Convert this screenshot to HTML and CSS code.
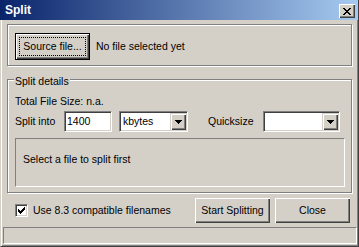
FILE: index.html
```html
<!DOCTYPE html>
<html lang="en">
  <head>
    <meta charset="UTF-8" />
    <title>Split</title>
    <link rel="stylesheet" href="styles.css">
  </head>

  <body>
    <div class="window">
      <div class="titleBar">
        <span class="title">Split</span>
        <span class="closeButton">
          <svg width="8" height="7" viewBox="0 0 8 7" shape-rendering="crispEdges">
            <path d="M0 0h2v1H0zM6 0h2v1H6zM1 1h2v1H1zM5 1h2v1H5zM2 2h4v1H2zM3 3h2v1H3zM2 4h4v1H2zM1 5h2v1H1zM5 5h2v1H5zM0 6h2v1H0zM6 6h2v1H6z" />
          </svg>
        </span>
      </div>

      <div class="group sourceGroup">
        <button class="button defaultButton"><span class="focus">Source file...</span></button>
        <span class="fileName">No file selected yet</span>
      </div>

      <div class="group detailsGroup">
        <span class="legend">Split details</span>
        <p class="line">Total File Size: n.a.</p>
        <div class="splitRow">
          <span class="splitLabel">Split into</span>
          <span class="edit">1400</span>
          <span class="combo unitCombo">
            <span class="comboText">kbytes</span>
            <span class="comboArrow">
              <svg width="7" height="4" viewBox="0 0 7 4" shape-rendering="crispEdges">
                <path d="M0 0h7v1H0zM1 1h5v1H1zM2 2h3v1H2zM3 3h1v1H3z" />
              </svg>
            </span>
          </span>
          <span class="quickLabel">Quicksize</span>
          <span class="combo quickCombo">
            <span class="comboText"></span>
            <span class="comboArrow">
              <svg width="7" height="4" viewBox="0 0 7 4" shape-rendering="crispEdges">
                <path d="M0 0h7v1H0zM1 1h5v1H1zM2 2h3v1H2zM3 3h1v1H3z" />
              </svg>
            </span>
          </span>
        </div>
        <div class="message">Select a file to split first</div>
      </div>

      <div class="footer">
        <label class="check">
          <span class="checkBox">
            <svg width="7" height="7" viewBox="0 0 7 7" shape-rendering="crispEdges">
              <path d="M6 0h1v1H6zM5 1h2v1H5zM0 2h1v1H0zM4 2h3v1H4zM0 3h2v1H0zM3 3h3v1H3zM0 4h5v1H0zM1 5h3v1H1zM2 6h1v1H2z" />
            </svg>
          </span>
          Use 8.3 compatible filenames
        </label>
        <button class="button startButton">Start Splitting</button>
        <button class="button">Close</button>
      </div>

      <div class="statusBar"></div>
    </div>
  </body>
</html>
```

FILE: styles.css
```css
body {
  margin: 0;
  background-color: #d4d0c8;
  font-family: "Liberation Sans", Arial, sans-serif;
  font-size: 10.5px;
  line-height: 13px;
  color: #000;
}
.window {
  width: 359px;
  height: 247px;
  box-sizing: border-box;
  display: flex;
  flex-direction: column;
  border-left: 1px solid #d4d0c8;
  border-right: 1px solid #404040;
  border-bottom: 1px solid #404040;
  box-shadow: inset 1px 0 #fff, inset -1px -1px #808080;
}
.titleBar {
  height: 20px;
  margin-left: -1px;
  display: flex;
  align-items: flex-start;
  justify-content: space-between;
  background: linear-gradient(to right, #0a246a, #a6caf0);
}
.title {
  color: #fff;
  font-weight: bold;
  font-size: 12px;
  padding: 4px 0 0 5px;
}
.closeButton {
  width: 16px;
  height: 14px;
  margin: 4px 3px 0 0;
  display: flex;
  align-items: center;
  justify-content: center;
  background-color: #d4d0c8;
  box-shadow: inset 1px 1px #fff, inset -1px -1px #404040, inset -2px -2px #808080;
}
.group {
  width: 345px;
  box-sizing: border-box;
  margin-left: 6px;
  border: 1px solid #808080;
  box-shadow: inset 1px 1px #fff, 1px 1px #fff;
}
.sourceGroup {
  margin-top: 4px;
  display: flex;
  align-items: center;
  padding: 8px 7px 5px 7px;
}
.button {
  box-sizing: border-box;
  width: 75px;
  height: 25px;
  padding: 0;
  border: 0;
  font: inherit;
  color: #000;
  background-color: #d4d0c8;
  box-shadow: inset 1px 1px #fff, inset -1px -1px #404040, inset -2px -2px #808080;
}
.defaultButton {
  height: 27px;
  display: flex;
  border: 1px solid #000;
}
.focus {
  flex: 1;
  margin: 3px;
  border: 1px dotted #000;
  display: flex;
  align-items: center;
  justify-content: center;
}
.fileName {
  margin-left: 6px;
}
.detailsGroup {
  position: relative;
  margin-top: 13px;
  padding: 15px 6px 5px 7px;
}
.legend {
  position: absolute;
  top: -5px;
  left: 6px;
  padding: 0 1px;
  background-color: #d4d0c8;
}
.line {
  margin: 0;
}
.splitRow {
  margin-top: 3px;
  height: 21px;
  display: flex;
  align-items: center;
}
.splitLabel {
  width: 49px;
}
.edit,
.combo {
  box-sizing: border-box;
  height: 21px;
  border: 1px solid;
  border-color: #808080 #fff #fff #808080;
  box-shadow: inset 1px 1px #404040, inset -1px -1px #d4d0c8;
  background-color: #fff;
}
.edit {
  width: 48px;
  padding: 3px 0 0 2px;
}
.combo {
  display: flex;
  padding: 1px;
}
.unitCombo {
  width: 69px;
  margin-left: 7px;
}
.quickCombo {
  width: 77px;
}
.comboText {
  flex: 1;
  padding: 2px 0 0 2px;
}
.comboArrow {
  width: 16px;
  display: flex;
  align-items: center;
  justify-content: center;
  background-color: #d4d0c8;
  box-shadow: inset 1px 1px #d4d0c8, inset 2px 2px #fff, inset -1px -1px #404040, inset -2px -2px #808080;
}
.quickLabel {
  margin-left: 20px;
  width: 55px;
}
.message {
  margin-top: 6px;
  height: 49px;
  box-sizing: border-box;
  padding: 14px 0 0 7px;
  border: 1px solid;
  border-color: #808080 #fff #fff #808080;
}
.footer {
  margin: 5px 8px 0 14px;
  height: 25px;
  display: flex;
  align-items: center;
  gap: 5px;
}
.check {
  display: flex;
  align-items: center;
  gap: 5px;
  margin-right: auto;
}
.checkBox {
  width: 13px;
  height: 13px;
  box-sizing: border-box;
  display: flex;
  align-items: center;
  justify-content: center;
  border: 1px solid;
  border-color: #808080 #fff #fff #808080;
  box-shadow: inset 1px 1px #404040, inset -1px -1px #d4d0c8;
  background-color: #fff;
}
.statusBar {
  height: 17px;
  box-sizing: border-box;
  margin: 4px 1px 0 2px;
  border: 1px solid;
  border-color: #808080 #fff #fff #808080;
}
```
